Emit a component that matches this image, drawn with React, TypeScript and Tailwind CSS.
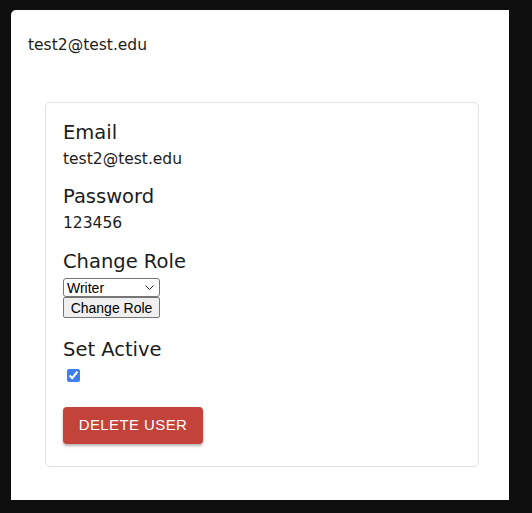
export default function App() {
  return (
    <div className="min-h-screen w-full bg-[#0f0f0f] pt-[10px] pl-[11px] font-['DejaVu_Sans',sans-serif] text-[#1c1c1c]">
      <div className="w-[498px] h-[490px] bg-white rounded-tl-[5px] pt-[23px]">
        <div className="pl-[17px] text-[15.5px] leading-[24px]">test2@test.edu</div>

        <div className="mt-[45px] ml-[34px] w-[434px] border border-[#e3e3e3] rounded-[5px] pt-[16px] pb-[22px] px-[17px]">
          <h2 className="text-[19.5px] leading-[28px]">Email</h2>
          <p className="text-[15.5px] leading-[24px]">test2@test.edu</p>

          <h2 className="mt-[12px] text-[19.5px] leading-[28px]">Password</h2>
          <p className="text-[15.5px] leading-[24px]">123456</p>

          <h2 className="mt-[13px] text-[19.5px] leading-[28px]">Change Role</h2>
          <div className="mt-[2px] flex flex-col w-[97px] font-['Liberation_Sans',Arial,sans-serif] text-[14px] text-black">
            <div className="relative">
              <select
                defaultValue="Writer"
                className="block w-full h-[19px] appearance-none border border-[#767676] rounded-[3px] bg-white pl-[3px] leading-none"
              >
                <option>Admin</option>
                <option>Editor</option>
                <option>Writer</option>
              </select>
              <svg
                className="absolute right-[6px] top-[7px] w-[9px] h-[5px] pointer-events-none"
                viewBox="0 0 9 5"
                fill="none"
                stroke="#222"
                strokeWidth="1"
              >
                <path d="M0.5 0.5L4.5 4.5L8.5 0.5" />
              </svg>
            </div>
            <button className="h-[21px] border border-[#767676] rounded-[2px] bg-[#efefef] px-[6px] leading-none">
              Change Role
            </button>
          </div>

          <h2 className="mt-[18px] text-[19.5px] leading-[28px]">Set Active</h2>
          <div className="h-[20px]">
            <input
              type="checkbox"
              defaultChecked
              className="mt-[5px] ml-[4px] w-[13px] h-[13px] accent-[#3b7ff0] align-top"
            />
          </div>

          <button className="mt-[23px] h-[37px] w-[140px] rounded-[4px] bg-[#c3423a] text-white font-['Liberation_Sans',Arial,sans-serif] text-[15px] tracking-[0.4px] shadow-[0_2px_3px_rgba(0,0,0,0.3)]">
            DELETE USER
          </button>
        </div>
      </div>
    </div>
  );
}
